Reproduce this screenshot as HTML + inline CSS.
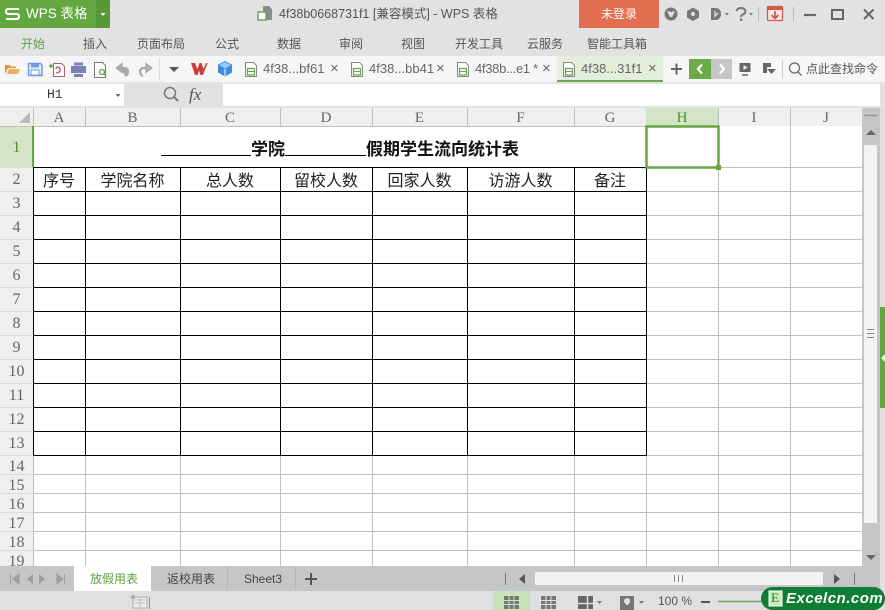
<!DOCTYPE html>
<html lang="zh"><head><meta charset="utf-8"><title>WPS 表格</title>
<style>
html,body{margin:0;padding:0}
body{width:885px;height:610px;overflow:hidden;position:relative;background:#e2e2e4;font-family:"Liberation Sans","Noto Sans CJK SC",sans-serif;color:#555;font-size:12px}
.a{position:absolute;white-space:nowrap}
.m{position:absolute;top:36px;line-height:17px;font-size:12px;color:#555}
.t{position:absolute;top:60px;line-height:18px;font-size:13px;color:#666}
.x{position:absolute;top:60px;line-height:18px;font-size:15px;color:#666}
.h{position:absolute;top:108px;height:18px;line-height:20px;text-align:center;font-family:"Liberation Serif",serif;font-size:15px;color:#666}
.r{position:absolute;left:0;width:33px;text-align:center;font-family:"Liberation Serif",serif;font-size:16px;color:#666;line-height:18px}
.c{position:absolute;top:168px;height:23px;line-height:23px;text-align:center;font-size:16px;color:#222;font-family:"Noto Sans CJK SC",sans-serif}
svg{position:absolute;left:0;top:0}
</style></head>
<body>
<!-- title bar -->
<div class="a" style="left:0;top:0;width:96px;height:28px;background:#62a73f"></div>
<div class="a" style="left:96px;top:0;width:14px;height:28px;background:#57983a"></div>
<div class="a" style="left:26px;top:5px;line-height:18px;font-size:13.500px;color:#fff">WPS 表格</div>
<div class="a" style="left:279px;top:5px;line-height:18px;font-size:12.500px;color:#555">4f38b0668731f1 [兼容模式] - WPS 表格</div>
<div class="a" style="left:579px;top:0;width:80px;height:28px;background:#e46f50;color:#fff;text-align:center;line-height:28px;font-size:12px">未登录</div>
<!-- menu -->
<div class="m" style="left:21px;color:#5e9f3c">开始</div>
<div class="m" style="left:83px">插入</div>
<div class="m" style="left:137px">页面布局</div>
<div class="m" style="left:215px">公式</div>
<div class="m" style="left:277px">数据</div>
<div class="m" style="left:339px">审阅</div>
<div class="m" style="left:401px">视图</div>
<div class="m" style="left:455px">开发工具</div>
<div class="m" style="left:527px">云服务</div>
<div class="m" style="left:587px">智能工具箱</div>
<!-- toolbar row -->
<div class="a" style="left:0;top:56px;width:885px;height:26px;background:#f6f6f6"></div>
<div class="a" style="left:557px;top:56px;width:106px;height:24px;background:#e4efdb;border-bottom:2px solid #6fa653"></div>
<div class="t" style="left:263px">4f38...bf61</div><div class="x" style="left:330px">×</div>
<div class="t" style="left:369px">4f38...bb41</div><div class="x" style="left:436px">×</div>
<div class="t" style="left:475px;letter-spacing:-.3px">4f38b...e1 *</div><div class="x" style="left:542px">×</div>
<div class="t" style="left:581px">4f38...31f1</div><div class="x" style="left:648px">×</div>
<div class="a" style="left:689px;top:59px;width:22px;height:20px;background:#6cab4a"></div>
<div class="a" style="left:711px;top:59px;width:21px;height:20px;background:#c6c6c6"></div>
<div class="a" style="left:806px;top:60px;line-height:18px;font-size:12px;color:#555">点此查找命令</div>
<!-- formula row -->
<div class="a" style="left:0;top:84px;width:124px;height:22px;background:#fff"></div>
<div class="a" style="left:223px;top:84px;width:657px;height:22px;background:#fff"></div>
<div class="a" style="left:47px;top:86px;line-height:18px;font-family:'Liberation Mono',monospace;font-size:13px;color:#333">H1</div>
<div class="a" style="left:189px;top:85px;line-height:20px;font-family:'Liberation Serif',serif;font-style:italic;font-size:17px;color:#555">fx</div>
<!-- sheet -->
<div class="a" style="left:0;top:108px;width:862px;height:18px;background:#efeff0"></div>
<div class="a" style="left:0;top:126px;width:33px;height:440px;background:#efeff0"></div>
<div class="a" style="left:33px;top:126px;width:829px;height:440px;background:#fff"></div>
<div class="a" style="left:0;top:126px;width:33px;height:41px;background:#d3e4c7"></div>
<div class="a" style="left:646px;top:108px;width:73px;height:18px;background:#d3e4c7"></div>
<!-- scrollbar -->
<div class="a" style="left:862px;top:108px;width:18px;height:458px;background:#c6c6c8"></div>
<div class="a" style="left:864px;top:145px;width:13px;height:378px;background:#f3f3f4"></div>
<div class="a" style="left:880px;top:108px;width:5px;height:483px;background:#e0e0e2"></div>
<div class="a" style="left:880px;top:307px;width:5px;height:101px;background:#5fa83a"></div>

<svg width="885" height="610" viewBox="0 0 885 610" fill="none">
<!-- WPS logo -->
<path d="M19 9H8.500Q6 9 6 11.500T8.500 14H16.500Q19 14 19 16.500T16.500 19H6" stroke="#fff" stroke-width="2"/>
<path d="M100.500 13h5l-2.500 3z" fill="#fff"/>
<!-- doc icon title -->
<path d="M263 6h6l3 3v11h-9z" fill="#8c8c8c"/><rect x="258" y="12" width="8" height="8" fill="#fff" stroke="#6da64f" stroke-width="1.500"/>
<!-- title icons -->
<circle cx="671" cy="14" r="6.500" fill="#777"/><path d="M667 11l4 1 4-1-3 6h-2z" fill="#e2e2e4"/>
<path d="M693 7.500l6 3.500v6.500l-6 3.500-6-3.500v-6.500z" fill="#777"/><circle cx="693" cy="14" r="2" fill="#e2e2e4"/>
<path d="M711 8h4q6 0 6 6t-6 6h-4z" fill="#777"/><path d="M715 11v5l3-3" stroke="#e2e2e4" stroke-width="1.300"/>
<path d="M725 13h4l-2 2.500z" fill="#777"/>
<path d="M736.500 11q1-3 4.500-3t4.500 3q0 2.500-2.500 3.500-2 .8-2 2.500" stroke="#777" stroke-width="2"/><rect x="740" y="18.500" width="2.200" height="2.500" fill="#777"/>
<path d="M749 13h4l-2 2.500z" fill="#777"/>
<path d="M758.500 7v14M793.500 7v14" stroke="#bbb"/>
<rect x="767.500" y="6.500" width="15" height="14" rx="1" stroke="#d35b4b" stroke-width="1.300" fill="#f6e9e6"/><path d="M768 7h14v3h-14z" fill="#d35b4b"/>
<path d="M775 11v7M771.500 15l3.500 3.500 3.500-3.500" stroke="#d35b4b" stroke-width="1.800"/>
<path d="M804 15h12" stroke="#666" stroke-width="2.200"/>
<rect x="832" y="10" width="11" height="9" stroke="#666" stroke-width="2"/>
<path d="M864 9.500l9.500 9.500M873.500 9.500l-9.500 9.500" stroke="#666" stroke-width="2"/>
<!-- toolbar icons -->
<path d="M5 74v-9h5l1 1.500h5V68H8l-3 6z" fill="#e8943c"/><path d="M7 74l2-5h11l-2 5z" fill="#f2ab5c"/>
<path d="M28.500 63.500h12l1.500 1.500v10.500h-13.500z" fill="#e6eefa" stroke="#6f9cdc" stroke-width="1.500"/><rect x="31" y="63.500" width="8" height="4" fill="#6f9cdc"/><rect x="31" y="70" width="8" height="5" fill="#fff" stroke="#6f9cdc"/>
<path d="M53.500 63.500h8l3 3v10h-11z" fill="#fff" stroke="#b05c72"/><path d="M56 73q4 0 4-3t-2-3-2 2" stroke="#c24a5e" stroke-width="1.300"/>
<path d="M49 66h4M51 64v4" stroke="#5fa83a" stroke-width="1.500"/>
<rect x="71" y="66" width="15" height="7" fill="#7c7fb8"/><rect x="74" y="62.500" width="9" height="3" fill="#7c7fb8"/><rect x="74" y="74" width="9" height="3" fill="#7c7fb8"/>
<path d="M94.500 62.500h8l3 3v12h-11z" fill="#fff" stroke="#777"/><circle cx="102" cy="72" r="2.500" stroke="#5fa83a" stroke-width="1.300"/><path d="M104 74l2 2" stroke="#5fa83a" stroke-width="1.300"/>
<path d="M117 68l4.500-3.500v7zM120 68h3q5 0 5 3.500t-3 4.500" stroke="#a9a9a9" stroke-width="2.200" fill="#a9a9a9" fill-rule="evenodd"/>
<path d="M151 68l-4.500-3.500v7zM148 68h-3q-5 0-5 3.500t3 4.500" stroke="#a9a9a9" stroke-width="2.200"/>
<path d="M159.500 58v22" stroke="#ddd"/>
<path d="M169 67h10l-5 5z" fill="#555"/>
<path d="M191 63h4l2.500 6 2-6h2l2 6 2.500-6h1.500l-4.500 12h-2.500l-1.500-4.500-1.500 4.500h-2.500z" fill="#d13b3b"/>
<path d="M225 61l7 3.500v8l-7 4-7-4v-8z" fill="#3c8fe0"/><path d="M219 65l6 3.500 6-3.500-6-3z" fill="#9cc9f2"/><path d="M225 69v7" stroke="#fff"/>
<g id="d" stroke="#6da64f" fill="#fff"><path d="M245.500 62.500h8l3 3v11h-11z" stroke="#888"/><rect x="247.500" y="68.500" width="7" height="6.500" stroke-width="1.300"/><path d="M247.500 71.500h7" stroke-width="1"/></g>
<use href="#d" x="106"/><use href="#d" x="212"/><use href="#d" x="318"/>
<path d="M671 69h11M676.500 63.500v11" stroke="#666" stroke-width="2"/>
<path d="M702 64.500l-4 4.500 4 4.500" stroke="#fff" stroke-width="2.200"/>
<path d="M720 64.500l4 4.500-4 4.500" stroke="#fff" stroke-width="2.200"/>
<rect x="739.500" y="63" width="11" height="9" fill="#666"/><path d="M743.500 65v5l4-2.500z" fill="#f6f6f6"/><path d="M742 75h6" stroke="#666" stroke-width="1.500"/>
<path d="M763 63h8v4h-4v6h-4z" fill="#666"/><path d="M767 69h9l-4.500 5z" fill="#666"/>
<path d="M782.500 60v19" stroke="#ccc"/>
<circle cx="794.500" cy="68" r="5" stroke="#666" stroke-width="1.200"/><path d="M798 72l3.500 3.500" stroke="#666" stroke-width="1.300"/>
<!-- formula icons -->
<path d="M115.500 94h5l-2.500 3z" fill="#666"/>
<circle cx="170" cy="93" r="5.500" stroke="#777" stroke-width="1.500"/><path d="M174 97l4 4" stroke="#777" stroke-width="2"/>
<!-- select corner -->
<path d="M30 112v11H19z" fill="#b9b9b9"/>
<!-- grid light -->
<g stroke="#c0c0c0">
<path d="M85.500 108v18M180.500 108v18M280.500 108v18M372.500 108v18M467.500 108v18M574.500 108v18M718.500 108v18M790.500 108v18"/>
<path d="M85.500 455v111M180.500 455v111M280.500 455v111M372.500 455v111M467.500 455v111M574.500 455v111M646.500 455v111"/>
<path d="M718.500 126v440M790.500 126v440"/>
<path d="M646 167.500h216M646 191.500h216M646 215.500h216M646 239.500h216M646 263.500h216M646 287.500h216M646 311.500h216M646 335.500h216M646 359.500h216M646 383.500h216M646 407.500h216M646 431.500h216M646 455.500h216"/>
<path d="M33 474.500h829M33 493.500h829M33 512.500h829M33 531.500h829M33 550.500h829"/>
<path d="M0 126.500h33M0 167.500h33M0 191.500h33M0 215.500h33M0 239.500h33M0 263.500h33M0 287.500h33M0 311.500h33M0 335.500h33M0 359.500h33M0 383.500h33M0 407.500h33M0 431.500h33M0 455.500h33M0 474.500h33M0 493.500h33M0 512.500h33M0 531.500h33M0 550.500h33" stroke="#dcdcdc"/>
<path d="M0 126.500h646M33.500 108v458"/>
</g>
<!-- table black -->
<g stroke="#000">
<path d="M33 167.500h614M33 191.500h614M33 215.500h614M33 239.500h614M33 263.500h614M33 287.500h614M33 311.500h614M33 335.500h614M33 359.500h614M33 383.500h614M33 407.500h614M33 431.500h614M33 455.500h614"/>
<path d="M33.500 167v289M85.500 167v289M180.500 167v289M280.500 167v289M372.500 167v289M467.500 167v289M574.500 167v289M646.500 167v289"/>
</g>
<!-- row1 head accent -->
<path d="M33 126v41" stroke="#62a73f" stroke-width="2"/>
<!-- selection -->
<rect x="646.500" y="126.500" width="72" height="41" stroke="#65a543" stroke-width="2.500"/>
<rect x="716" y="165" width="5" height="5" fill="#65a543"/>
<!-- title underlines -->
<path d="M161 155.500h90M285 155.500h81" stroke="#000"/>
<!-- scrollbar bits -->
<path d="M864 115.500h14" stroke="#999" stroke-width="1.500"/>
<path d="M866 135l5-5 5 5z" fill="#666"/>
<path d="M867 329.500h7M867 333.500h7M867 337.500h7" stroke="#888"/>
<path d="M885 354v8l-4-4z" fill="#e8f3e0"/>
<!-- tab bar -->
<rect x="0" y="566" width="880" height="25" fill="#c6c6c8"/>
<rect x="74" y="566" width="77" height="25" fill="#fff"/>
<path d="M227.500 567v23M295.500 567v23" stroke="#b4b4b4"/>
<path d="M10.500 574v10M19 574l-6 5 6 5z" stroke="#9e9e9e" fill="#9e9e9e"/>
<path d="M33 574l-6 5 6 5zM39 574l6 5-6 5z" fill="#9e9e9e"/>
<path d="M57 574l6 5-6 5zM64.500 574v10" fill="#9e9e9e" stroke="#9e9e9e"/>
<path d="M305 579h12M311 573v12" stroke="#555" stroke-width="2"/>
<path d="M505.500 573v12M854.500 573v12" stroke="#777"/>
<path d="M525 574v10l-6-5z" fill="#555"/>
<rect x="535" y="572" width="288" height="13" fill="#f2f2f3"/>
<path d="M674.500 575v7M678.500 575v7M682.500 575v7" stroke="#888"/>
<path d="M834 574v10l6-5z" fill="#555"/>
<path d="M866 555h10l-5 5z" fill="#666"/>
<!-- status -->
<rect x="0" y="591" width="885" height="19" fill="#e0e0e2"/>
<rect x="493" y="591" width="37" height="19" fill="#c8e2bb"/>
<path d="M133 597h14v11h-14z" fill="#eee" stroke="#aaa"/><path d="M135 600h10M135 603h10M140 598v9" stroke="#bbb"/><circle cx="133" cy="597" r="2" fill="#aaa"/><path d="M149.500 597v12" stroke="#999"/>
<rect x="504" y="596" width="15" height="13" fill="#777"/><path d="M504 600.500h15M504 604.500h15M509 596v13M514 596v13" stroke="#c8e2bb"/>
<rect x="541" y="596" width="15" height="13" fill="#777"/><path d="M541 600.500h15M541 604.500h15M546 596v13M551 596v13" stroke="#e0e0e2"/>
<rect x="578" y="596" width="15" height="13" fill="#666"/><path d="M578 603.500h15M587.500 596v13" stroke="#e0e0e2" stroke-width="1.500"/>
<path d="M597 601h5l-2.500 3z" fill="#777"/>
<rect x="620" y="596" width="14" height="14" fill="#777"/><path d="M627 598q3 0 3 3t-2 3v1h-2v-1q-2-1-2-3t3-3z" fill="#e0e0e2"/>
<path d="M639 601h5l-2.500 3z" fill="#777"/>
<path d="M701 602h9" stroke="#555" stroke-width="2"/>
<path d="M718 601.500h45" stroke="#6fa653" stroke-width="1.500"/>
<!-- logo -->
<rect x="761" y="587" width="124" height="23" rx="11.500" fill="#0f7d33"/>
<rect x="769" y="591" width="13" height="15" fill="#cfe8b8" stroke="#fff"/>
</svg>
<!-- column headers -->
<div class="h" style="left:33px;width:52px">A</div>
<div class="h" style="left:85px;width:95px">B</div>
<div class="h" style="left:180px;width:100px">C</div>
<div class="h" style="left:280px;width:92px">D</div>
<div class="h" style="left:372px;width:95px">E</div>
<div class="h" style="left:467px;width:107px">F</div>
<div class="h" style="left:574px;width:72px">G</div>
<div class="h" style="left:646px;width:72px;color:#4f8f2f">H</div>
<div class="h" style="left:718px;width:72px">I</div>
<div class="h" style="left:790px;width:72px">J</div>
<!-- row numbers -->
<div class="r" style="top:139px;color:#4f8f2f">1</div>
<div class="r" style="top:171px">2</div>
<div class="r" style="top:195px">3</div>
<div class="r" style="top:219px">4</div>
<div class="r" style="top:243px">5</div>
<div class="r" style="top:267px">6</div>
<div class="r" style="top:291px">7</div>
<div class="r" style="top:315px">8</div>
<div class="r" style="top:339px">9</div>
<div class="r" style="top:363px">10</div>
<div class="r" style="top:387px">11</div>
<div class="r" style="top:411px">12</div>
<div class="r" style="top:435px">13</div>
<div class="r" style="top:458px">14</div>
<div class="r" style="top:477px">15</div>
<div class="r" style="top:496px">16</div>
<div class="r" style="top:515px">17</div>
<div class="r" style="top:534px">18</div>
<div class="r" style="top:553px;height:13px;overflow:hidden">19</div>
<!-- title -->
<div class="a" style="left:251px;top:137px;line-height:22px;font-size:17px;font-weight:bold;color:#111;font-family:'Noto Sans CJK SC',sans-serif">学院</div>
<div class="a" style="left:366px;top:137px;line-height:22px;font-size:17px;font-weight:bold;color:#111;font-family:'Noto Sans CJK SC',sans-serif">假期学生流向统计表</div>
<!-- table headers -->
<div class="c" style="left:33px;width:52px">序号</div>
<div class="c" style="left:85px;width:95px">学院名称</div>
<div class="c" style="left:180px;width:100px">总人数</div>
<div class="c" style="left:280px;width:92px">留校人数</div>
<div class="c" style="left:372px;width:95px">回家人数</div>
<div class="c" style="left:467px;width:107px">访游人数</div>
<div class="c" style="left:574px;width:72px">备注</div>
<!-- tabs -->
<div class="a" style="left:90px;top:570px;line-height:18px;font-size:12px;color:#5fa03e">放假用表</div>
<div class="a" style="left:167px;top:570px;line-height:18px;font-size:12px;color:#444">返校用表</div>
<div class="a" style="left:244px;top:570px;line-height:18px;font-size:12px;color:#444">Sheet3</div>
<div class="a" style="left:658px;top:592px;line-height:18px;font-size:12px;color:#555">100 %</div>
<div class="a" style="left:771px;top:589px;line-height:18px;font-size:13px;font-family:'Liberation Serif',serif;color:#0f7d33">E</div>
<div class="a" style="left:786px;top:589px;line-height:19px;font-size:15px;font-weight:bold;font-style:italic;color:#fff;letter-spacing:.5px">Excelcn.com</div>
</body></html>
